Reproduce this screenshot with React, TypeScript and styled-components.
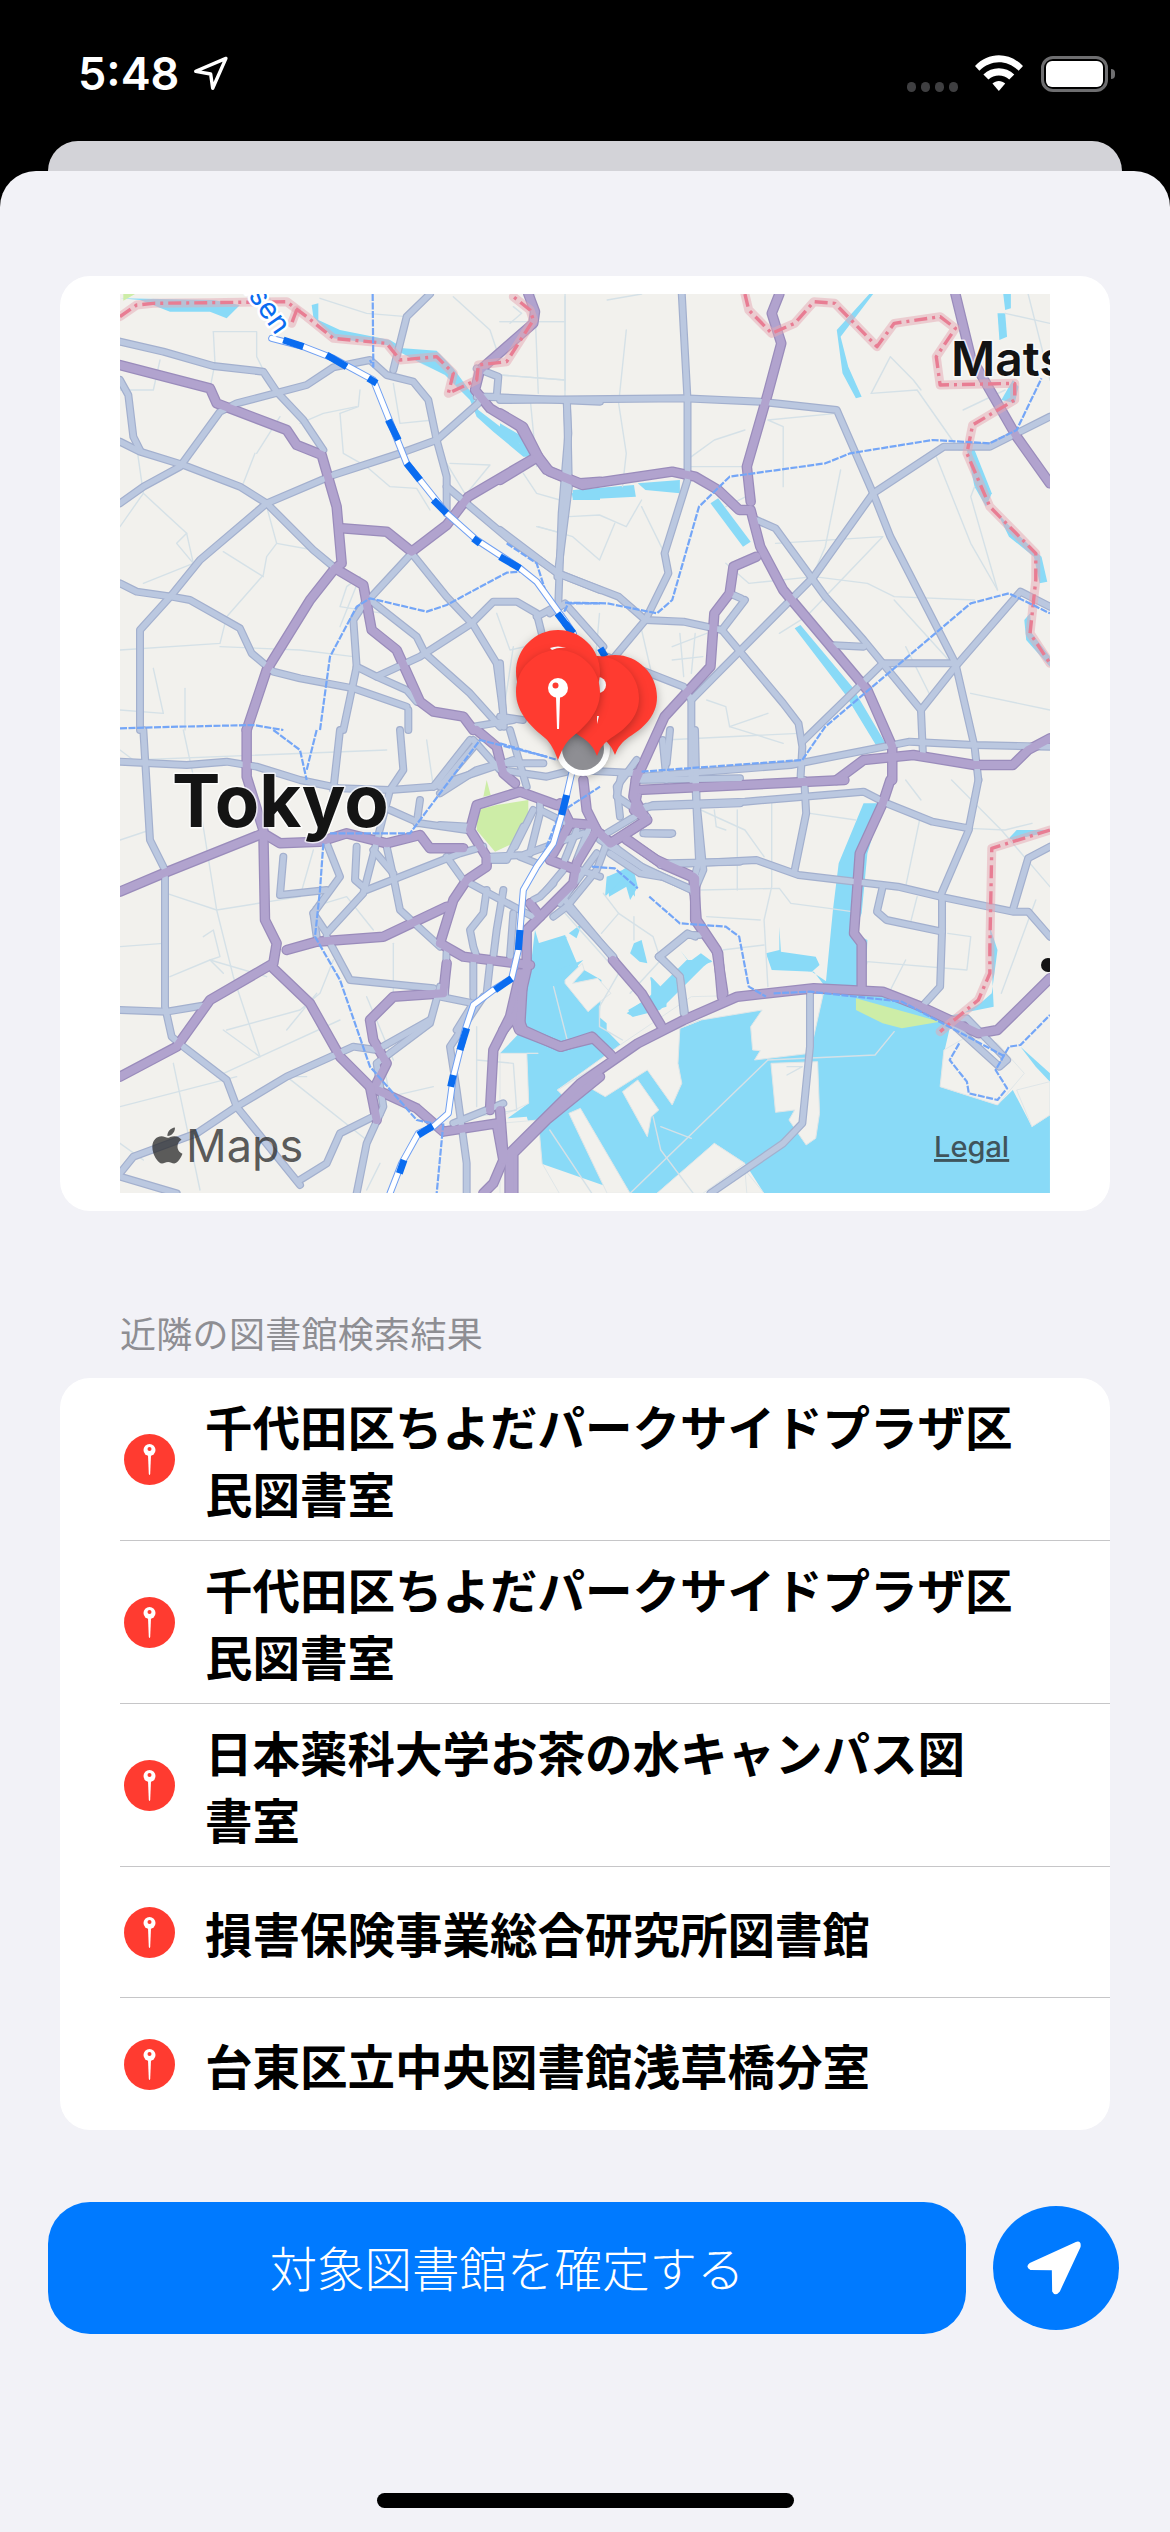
import React from "react";
import styled, { createGlobalStyle } from "styled-components";

const Global = createGlobalStyle`
  html, body { margin: 0; padding: 0; background: #000; }
`;

const CJK = `"Noto Sans CJK JP", "Noto Sans", sans-serif`;

const Screen = styled.div`
  width: 1170px; height: 2532px; background: #000; display: flex; flex-direction: column; overflow: hidden;
  font-family: ${CJK};
`;
const StatusBar = styled.div`
  height: 141px; box-sizing: border-box; padding: 55px 62px 0 78px; display: flex; align-items: flex-start; color: #fff;
`;
const Time = styled.div`
  font: 600 45px/38px Inter, sans-serif; width: 115px;
`;
const StatusRight = styled.div`
  margin-left: auto; display: flex; align-items: flex-start;
`;
const Dots = styled.div`
  display: flex; gap: 4.5px; margin: 27px 17px 0 0;
`;
const Dot = styled.span`
  width: 9.5px; height: 9.5px; border-radius: 50%; background: #3f3f41;
`;
const Battery = styled.div`
  width: 67px; height: 36px; margin: 1px 0 0 18px; box-sizing: border-box; border: 3px solid #6e6e70; border-radius: 12px; padding: 2px; position: relative;
  &::after { content: ""; position: absolute; right: -10px; top: 10px; width: 4px; height: 10px; background: #6e6e70; border-radius: 0 4px 4px 0; }
`;
const BatteryFill = styled.div`
  width: 100%; height: 100%; background: #fff; border-radius: 6px;
`;
const BackSheet = styled.div`
  margin: 0 48px; height: 30px; background: #d3d3d8; border-radius: 36px 36px 0 0; flex: none;
`;
const Sheet = styled.div`
  flex: 1; background: #f2f2f7; border-radius: 36px 36px 0 0; padding-top: 105px; display: flex; flex-direction: column;
`;
const MapCard = styled.div`
  margin: 0 60px; background: #fff; border-radius: 30px; padding: 18px 60px; height: 899px; flex: none;
`;
const MapSvg = styled.svg`
  display: block; width: 930px; height: 899px; background: #f2f1ed;
`;
const Water = styled.path`
  fill: #89daf7;
`;
const Land = styled.path`
  fill: #f2f1ed; stroke: #dfe6e8; stroke-width: 1; vector-effect: non-scaling-stroke;
`;
const Park = styled.path`
  fill: #cdeda7;
`;
const Line = styled.path<{ $c: string; $w: number; $dash?: string; $o?: number }>`
  fill: none; stroke: ${(p) => p.$c}; stroke-width: ${(p) => p.$w}; stroke-linejoin: round; stroke-linecap: ${(p) => (p.$dash ? "butt" : "round")};
  vector-effect: non-scaling-stroke; stroke-dasharray: ${(p) => p.$dash || "none"}; opacity: ${(p) => p.$o ?? 1};
`;
const MapLabel = styled.text<{ $s: number; $w: number }>`
  font-family: Inter, "Liberation Sans", sans-serif; font-size: ${(p) => p.$s}px; font-weight: ${(p) => p.$w}; fill: #141414;
  paint-order: stroke; stroke: rgba(255, 255, 255, 0.75); stroke-width: 3px; stroke-linejoin: round;
`;
const RailLabel = styled.text`
  font-family: Inter, "Liberation Sans", sans-serif; font-size: 29px; fill: #0a6cf0;
  paint-order: stroke; stroke: #fff; stroke-width: 5px; stroke-linejoin: round;
`;
const Attribution = styled.text<{ $s: number; $w: number; $u?: boolean }>`
  font-family: Inter, "Liberation Sans", sans-serif; font-size: ${(p) => p.$s}px; font-weight: ${(p) => p.$w}; fill: rgba(40, 40, 40, 0.75);
  text-decoration: ${(p) => (p.$u ? "underline" : "none")}; text-decoration-thickness: 3px;
`;
const SectionLabel = styled.div`
  margin: 96px 0 21px 120px; height: 50px; font-size: 36px; letter-spacing: 0.3px; line-height: 50px; color: #8e8e93; font-weight: 400; flex: none;
`;
const List = styled.div`
  margin: 0 60px; background: #fff; border-radius: 30px; flex: none; overflow: hidden;
`;
const Row = styled.div<{ $h: number }>`
  height: ${(p) => p.$h}px; margin-left: 60px; display: flex; align-items: center; box-sizing: border-box;
  &:not(:last-child) { border-bottom: 1.5px solid #c6c6c8; }
`;
const RowIcon = styled.svg`
  width: 51px; height: 51px; margin: 0 30px 0 4px; flex: none;
`;
const RowText = styled.div`
  font-size: 47.5px; line-height: 67px; font-weight: 600; color: #000; white-space: pre-line;
`;
const Actions = styled.div`
  margin: 72px 51px 0 48px; display: flex; align-items: center; justify-content: space-between; flex: none;
`;
const Confirm = styled.button`
  width: 918px; height: 132px; border: 0; border-radius: 42px; background: #007aff; color: #fff; font: 300 47.5px ${CJK}; padding: 0 0 3px;
`;
const Round = styled.button`
  width: 126px; height: 124px; border: 0; border-radius: 50%; background: #007aff; padding: 0; display: flex;
`;
const Home = styled.div`
  width: 417px; height: 15px; border-radius: 8px; background: #000; margin: 159px auto 0; flex: none;
`;

const Z: Record<string, string> = {
  a: "translate(100 280) scale(.33333)",
  b: "translate(500 280) scale(.3827 .33333)",
  c: "translate(100 730) scale(.33333)",
  d: "translate(500 780) scale(.3827 .33333)",
  e: "translate(440 730) scale(.33333)",
};
type Data = Record<string, string[]>;

const water: Data = {
  a: [
    "M60 55 L340 60 L420 75 L380 115 L330 95 L210 95 L120 60Z",
    "M635 75 L655 70 L655 120 L720 150 L870 180 L910 205 L1010 212 L1060 265 L1115 340 L1135 390 L1240 470 L1295 530 L1270 530 L1180 455 L1130 410 L1110 360 L1035 285 L955 245 L1000 270 L860 195 L700 175 L640 110Z",
    "M1415 640 L1500 625 L1500 660 L1420 660Z",
  ],
  b: [
    "M0 430 L60 470 L85 530 L60 525 L50 490 L0 465Z",
    "M190 630 L350 615 L355 650 L190 660Z",
    "M360 610 L470 600 L470 640 L380 630Z",
    "M550 670 L570 655 L655 785 L635 800Z",
    "M770 1045 L785 1035 L920 1220 L1010 1395 L985 1400 L900 1240Z",
    "M880 150 L965 42 L975 42 L890 170 L910 260 L945 350 L930 355 L895 280Z",
    "M1315 42 L1335 42 L1335 85 L1320 90Z",
    "M1300 100 L1320 100 L1325 170 L1305 180Z",
    "M1340 300 L1355 320 L1345 370 L1310 360Z",
    "M1220 510 L1240 510 L1285 640 L1270 680 L1240 620Z",
    "M1300 700 L1350 760 L1415 830 L1430 905 L1410 910 L1395 830 L1330 770Z",
    "M1370 1020 L1385 1000 L1390 1060 L1437 1130 L1437 1160 L1375 1080Z",
  ],
  d: [
    "M70 560 L100 490 L170 465 L205 560 L265 600 L260 730 L320 800 L470 730 L700 650 L850 625 L870 390 L885 250 L950 70 L1000 70 L960 220 L945 400 L925 460 L960 480 L955 620 L1160 710 L1290 680 L1280 440 L1300 510 L1285 640 L1255 670 L1180 720 L1160 820 L1150 920 L1300 975 L1340 930 L1390 1040 L1437 1005 L1437 1240 L690 1240 L640 1150 L560 1090 L410 1240 L330 1240 L105 1150 L70 1010 L20 1015 L75 970 L70 820 L0 820 L50 760 L60 640Z",
    "M695 520 L730 510 L730 440 L734 515 L825 530 L835 555 L815 575 L860 610 L850 620 L820 575 L710 570Z",
    "M280 290 L320 270 L345 250 L360 320 L340 360 L330 320 L285 350Z",
    "M395 590 L420 620 L435 620 L435 680 L345 710 L335 690 L395 650Z",
    "M350 490 L370 480 L385 550 L365 545 L340 520Z",
    "M470 510 L495 545 L525 520 L555 545 L490 570 L470 590 L490 540Z",
    "M180 460 L215 430 L200 475Z",
    "M1330 175 L1350 150 L1437 150 L1437 155 L1340 180Z",
    "M1360 800 L1437 880 L1437 905 L1400 860Z",
  ],
  e: [
    "M285 600 L300 650 L380 620 L350 720 L430 690 L360 760 L500 880 L500 900 L265 900 L265 770Z",
    "M500 440 L550 430 L580 410 L585 500 L545 450 L495 500Z",
    "M560 850 L640 790 L630 740 L660 770 L740 690 L815 690 L790 710 L660 840L580 860Z",
  ],
};
const land: Data = {
  d: [
    "M170 600 L215 550 L220 570 L190 610 L255 595 L290 640 L255 670 L230 695 L170 610Z",
    "M100 820 L70 820 L75 970 L0 1010 L0 820Z",
    "M150 930 L320 810 L470 745 L525 720 L685 690 L655 740 L660 810 L680 812 L665 840 L810 820 L845 640 L500 650 L320 790Z",
    "M525 720 L470 745 L465 850 L475 910 L450 975 L385 870 L275 950 L230 920 L175 960 L150 930 L320 810Z",
    "M708 850 L830 845 L835 1000 L825 1075 L800 1095 L755 1020 L770 990 L720 997Z",
    "M320 935 L360 900 L415 990 L395 1010 L385 1070Z",
    "M180 1000 L210 985 L340 1240 L280 1240Z",
    "M410 1240 L560 1090 L640 1150 L530 1240Z",
    "M645 1240 L690 1240 L640 1170Z",
    "M0 1030 L100 1020 L110 1150 L155 1240 L0 1240Z",
    "M1150 920 L1160 810 L1220 770 L1300 790 L1370 880 L1300 975Z",
    "M1350 930 L1437 905 L1437 1005 L1390 1040Z",
  ],
};
const parks: Data = {
  a: ["M70 42 L105 42 L70 62Z"],
  c: ["M1130 300 L1130 240 L1190 225 L1285 210 L1285 270 L1240 340 L1185 365Z", "M1150 200 L1160 150 L1172 195Z"],
  d: ["M930 655 L1150 725 L1050 745 L1000 730 L930 690Z"],
  e: ["M245 365 L262 362 L258 388Z"],
};
const minor: Data = {
  a: [
    "M340 155 L345 250 L330 325", "M340 155 L470 155 L470 230 L490 270", "M180 240 L160 330 L60 330", "M110 500 L130 640 L260 760 L280 850",
    "M60 740 L130 640", "M720 400 L730 520 L800 560 L870 620 L950 625 L990 690", "M770 380 L670 400 L600 430", "M465 520 L430 610", "M540 410 L470 520",
    "M500 680 L530 790 L640 810", "M530 790 L500 830 L490 885 L380 1010 L360 1090 L60 1110", "M370 815 L490 890", "M260 760 L230 790 L280 850 L130 910",
    "M1050 550 L1170 555 L1100 640", "M1270 580 L1310 640 L1380 660", "M1310 740 L1390 760", "M1290 350 L1310 560", "M1395 50 L1395 350", "M1200 125 L1395 125",
    "M1200 285 L1395 300", "M1060 50 L1170 150 L1200 240", "M660 55 L800 100 L920 110", "M500 42 L560 130", "M1230 130 L1265 100 L1240 80", "M880 310 L900 430 L1000 420",
    "M720 400 L775 380 L780 330", "M1040 550 L1100 650", "M160 1165 L190 1300 L60 1290", "M255 1225 L255 1350", "M720 1040 L780 890 L740 920 L720 980 L850 1000", "M360 1100 L600 1110 L760 1130",
    "M1190 1000 L1230 1110 L1320 1090", "M1240 1100 L1210 1300",
  ],
  b: [
    "M170 42 L170 330", "M280 60 L370 42", "M330 150 L310 370 L330 520 L320 620", "M0 125 L170 125", "M0 285 L170 300", "M90 42 L100 340", "M500 530 L560 480 L640 450", "M500 560 L650 560",
    "M880 400 L700 420 L740 440 L740 620", "M590 680 L660 640", "M890 570 L850 800 L820 880", "M970 340 L1090 330 L1200 510", "M970 340 L1020 230 L1080 300 L1100 330", "M1210 390 L1320 330",
    "M1140 530 L1230 790 L1300 930", "M180 710 L260 705 L330 740 L370 660", "M100 740 L190 770 L260 840 L300 730", "M590 850 L650 910 L820 890 L960 910 L1030 950 L1240 960", "M1030 960 L1180 1150",
    "M730 1060 L800 1010 L1000 770", "M720 790 L1000 770", "M370 680 L430 820", "M1230 1240 L1437 1290", "M540 1260 L590 1280 L600 1340 L740 1390", "M430 1380 L780 1360", "M600 1340 L700 1300",
    "M450 1100 L540 1060", "M450 1140 L530 1130", "M470 1060 L480 1190", "M510 1060 L500 1180", "M1060 1100 L1130 1260", "M1240 620 L1230 650 L1300 930", "M1320 100 L1437 130", "M1380 42 L1437 300", "M260 1000 L250 1130", "M370 1050 L400 1200",
  ],
  c: [
    "M60 330 L150 300", "M250 0 L300 230 L350 540 L400 740 L480 980", "M60 650 L190 640", "M200 490 L350 540 L600 500", "M210 740 L330 690 L500 740", "M310 620 L340 600 L360 680 L330 690 L370 730",
    "M60 1130 L410 1040", "M220 1000 L300 1380", "M380 900 L600 840 L660 790 L700 690", "M370 900 L480 980 L350 1040", "M480 980 L720 870", "M620 1040 L560 1040 L800 1230", "M640 530 L740 500 L820 600",
    "M560 900 L650 790", "M880 640 L880 800", "M60 1240 L130 1290", "M1130 890 L1130 1130", "M1130 990 L1240 1000 L1250 1140 L1130 1160", "M60 60 L100 90 L860 60", "M800 800 L880 990", "M850 1000 L870 1100 L1000 1070",
    "M840 1300 L800 1380", "M980 30 L1000 170", "M640 360 L600 500",
  ],
  d: [
    "M525 90 L640 150 L690 230", "M620 90 L620 330", "M710 70 L710 320 L690 420 L700 620", "M525 330 L730 325 L760 370 L860 385 L920 395", "M540 410 L680 420", "M580 510 L690 495", "M810 100 L930 120",
    "M1060 0 L1100 60", "M1100 100 L1060 320", "M1170 460 L1230 470 L1220 570 L960 545 L930 640", "M1090 350 L1070 440", "M1060 540 L1020 630", "M1400 360 L1310 640", "M1180 0 L1310 150 L1437 320",
    "M1225 145 L1320 150 L1390 130", "M170 400 L310 580 L260 680 L260 740 L320 780", "M270 340 L310 400 L400 470 L420 540 L340 640", "M310 400 L265 460", "M350 410 L350 480", "M700 840 L980 825 L1030 755",
    "M400 1010 L420 1110 L505 1240", "M130 1050 L240 1240", "M420 1040 L500 1075", "M140 620 L180 800", "M340 1240 L700 840", "M560 90 L565 140 L590 150", "M750 860 L790 860 L750 885",
  ],
};
const roads: Data = {
  a: [
    "M60 185 L190 215 L340 258 L490 275 L530 335 L610 420 L670 510", "M60 485 L120 515 L250 555 L420 620 L500 670 L640 810 L700 860",
    "M60 670 L130 620 L240 560 L360 395 L410 370 L620 315 L700 262 L810 240 L860 285 L940 305 L985 360 L1010 480 L1040 590 L1040 700",
    "M60 300 L85 345 L100 470 L120 510", "M500 670 L700 585 L900 520 L1010 480 L1135 370 L1145 350 L1500 365", "M500 670 L300 840 L215 945 L120 1050 L120 1350",
    "M60 910 L110 935 L215 950 L270 960 L420 1045 L455 1120 L520 1175 L600 1195 L760 1225 L920 1280", "M1040 620 L1230 780 L1375 880 L1500 930", "M1400 365 L1405 460 L1385 700 L1375 970",
    "M880 270 L920 110 L990 42", "M1130 350 L1190 350 L1195 290 L1130 265", "M810 955 L935 820 L1040 950 L1120 1035 L1190 1150 L1210 1300", "M800 960 L760 1020 L770 1160 L730 1350",
    "M830 1190 L960 1130 L1115 1030 L1180 965 L1250 965 L1310 1000 L1325 1060", "M1310 1010 L1375 975", "M810 960 L950 1070 L975 1120 L1110 1240 L1200 1340", "M770 1160 L830 1190 L920 1230 L950 1265",
    "M925 1290 L925 1350", "M1120 1340 L1240 1320",
  ],
  b: [
    "M0 360 L480 355 L680 365 L880 390 L975 640 L1020 770 L1190 1150 L1240 1400 L1250 1500", "M475 42 L490 360 L490 600 L430 820 L440 880 L380 1020 L300 1130", "M175 360 L180 620 L150 890",
    "M0 750 L150 880 L310 950 L380 1020 L480 1025 L580 1050 L740 1270 L780 1330 L790 1400 L785 1500", "M975 640 L1160 500 L1280 500 L1437 410", "M975 640 L820 890 L560 1190 L500 1260 L500 1500",
    "M670 720 L720 745 L850 950 L950 1080 L1100 1290 L1105 1420", "M790 1385 L1000 1150 L1190 1150", "M1100 1290 L1190 1160 L1360 935 L1437 980", "M860 1095 L950 1100", "M600 940 L630 955",
    "M370 1490 L760 1455 L1070 1385 L1240 1395 L1437 1400", "M280 1130 L480 1220 L500 1260", "M0 1150 L10 1340", "M0 1310 L60 1320", "M425 1380 L435 1500", "M580 1050 L640 960", "M130 1000 L170 970 L270 1100",
  ],
  c: [
    "M60 95 L260 105 L380 95 L470 110 L600 150 L720 175 L870 180 L1000 170 L1120 130 L1240 90", "M130 0 L150 330 L195 420 L195 830 L215 920 L250 950 L380 1050 L410 1130 L600 1365",
    "M60 840 L200 845 L320 825", "M60 1340 L230 1390", "M60 1330 L100 1280 L290 1210 L410 1130 L560 1040 L760 950 L830 960 L990 870", "M720 0 L700 180", "M900 0 L910 120 L870 180 L790 490 L680 610 L640 550 L720 440 L680 340",
    "M550 380 L540 495 L680 480", "M680 620 L750 750 L1000 775", "M770 350 L765 450 L800 480 L1080 370 L1150 350", "M860 350 L880 440 L900 540 L1020 650", "M820 360 L880 430", "M1000 170 L1110 30", "M960 210 L950 280",
    "M870 240 L960 280 L1100 300", "M1020 770 L990 880 L830 1000 L850 1130 L800 1240 L770 1390", "M840 1150 L720 1210 L680 1300 L600 1350", "M1100 1390 L1100 1300 L1070 1080 L1050 950 L1150 800", "M1060 1180 L1210 1120", "M640 550 L650 620",
  ],
  d: [
    "M360 95 L400 75 L640 65 L950 35 L1010 70 L1130 125 L1225 145 L1250 0", "M510 0 L520 240 L500 330", "M795 0 L800 100 L770 270", "M420 255 L670 240 L780 285 L1040 320 L1150 350 L1340 395 L1380 395 L1437 470",
    "M170 360 L300 540", "M1000 320 L985 395 L1010 420 L1155 455 L1155 350", "M1155 455 L1150 620 L1110 670", "M1225 150 L1150 350", "M1437 200 L1380 235 L1340 390", "M270 165 L310 210 L370 260 L500 330", "M380 160 L450 160",
    "M415 530 L470 590 L480 700", "M415 530 L490 460 L510 470", "M810 640 L810 800 L790 1030 L740 1090 L550 1240", "M1180 720 L1220 715 L1325 840 L1305 860 L1180 730",
  ],
  e: [
    "M590 150 L900 145", "M590 240 L620 230 L900 220", "M765 0 L770 220 L790 420 L760 490", "M680 400 L900 395", "M480 330 L620 420 L760 480", "M510 370 L600 430 L660 440", "M380 530 L520 680",
    "M780 615 L740 615 L660 680 L720 740 L735 850", "M500 310 L600 250", "M610 310 L690 312", "M540 260 L530 170 L590 90", "M150 380 L250 375 L430 310", "M90 460 L240 540 L280 560", "M140 480 L130 550 L90 600 L100 650 L110 680",
    "M190 480 L170 600 L160 680", "M220 550 L210 680", "M100 690 L100 800", "M150 700 L140 790", "M20 660 L15 800", "M270 370 L300 250 L300 210", "M225 350 L280 240", "M300 240 L380 280", "M240 380 L290 400", "M150 390 L200 390 L250 290",
    "M340 460 L300 500 L280 510", "M370 420 L320 480", "M410 300 L370 400", "M445 300 L410 390", "M420 420 L480 440", "M360 520 L470 370", "M0 285 L90 290", "M0 190 L110 120 L180 100", "M110 40 L0 170", "M100 30 L180 120 L320 140 L400 120 L600 130",
    "M210 0 L260 170", "M690 0 L680 100", "M0 800 L100 820 L50 900", "M20 380 L70 450", "M545 130 L530 200 L620 260", "M340 560 L380 530 L470 420 L500 340", "M200 100 L310 100",
  ],
};
const highways: Data = {
  a: [
    "M60 255 L330 325 L350 370 L560 450 L590 495 L665 525 L710 680 L725 850 L705 865 L630 960 L500 1170 L440 1350", "M725 745 L860 755 L935 815 L1040 735 L1105 650 L1310 530 L1340 570 L1440 610 L1500 605",
    "M705 865 L790 915 L815 1050 L890 1110 L960 1265 L1000 1295 L1090 1310 L1120 1350", "M1310 530 L1260 440 L1170 385 L1125 330 L1140 270 L1300 130 L1305 95 L1285 42",
  ],
  b: [
    "M0 600 L100 530 L130 575 L215 615 L450 575 L510 590 L570 630 L625 690 L655 690 L680 800 L740 930 L960 1230 L1025 1400 L1025 1500", "M655 665 L645 560 L700 340 L735 190 L710 100 L730 42",
    "M670 830 L610 860 L600 940 L560 1000 L550 1160 L430 1310 L355 1500", "M1190 42 L1230 230 L1350 470 L1437 610", "M0 400 L60 440 L100 530", "M880 1500 L950 1440 L1080 1425 L1240 1455 L1340 1455 L1380 1410 L1437 1375",
  ],
  c: [
    "M440 0 L440 140 L490 300 L495 570 L530 640 L520 700 L330 810 L230 950 L60 1040", "M60 485 L190 430 L490 310 L540 340 L660 335 L740 310 L860 340 L960 315 L990 355 L1090 355",
    "M520 715 L630 820 L720 980 L810 1070 L950 1135 L1030 1205 L1190 1180 L1210 1290 L1180 1360 L1150 1390", "M810 1070 L830 1170", "M560 660 L650 635 L850 620 L1040 530",
    "M1020 640 L1060 510 L1100 450 L1160 410 L1160 380 L1110 300 L1130 225 L1260 185 L1370 225", "M1020 640 L1090 680 L1290 705", "M1040 700 L1030 790 L880 800 L810 870 L820 930 L860 1000 L830 1060",
    "M1240 1390 L1240 1270 L1340 1170 L1500 1040", "M1260 730 L1230 860 L1180 960 L1170 1140", "M1250 850 L1270 900 L1380 950 L1480 925", "M1130 0 L1190 50 L1210 130 L1245 160",
  ],
  d: [
    "M25 1240 L25 1120 L60 1080 L210 910 L360 790 L480 720 L620 650 L820 625 L1000 635 L1100 680 L1250 760 L1300 750 L1437 595", "M1020 0 L1000 70 L940 220 L925 460 L945 490 L945 620",
    "M900 0 L360 30 L350 90 L385 120 L290 190 L265 165", "M335 180 L420 250 L510 295 L510 420 L570 520 L580 650", "M295 540 L370 640 L420 735", "M40 720 L50 750 L160 800 L240 770 L290 825", "M0 990 L10 1140",
  ],
  e: [
    "M360 220 L390 280 L460 285 L470 300 L410 400 L400 460 L320 540 L260 600 L260 720 L230 850 L190 900", "M470 300 L440 240 L430 150", "M330 390 L410 420", "M340 370 L390 280", "M590 130 L580 200 L620 270 L510 340 L480 310",
    "M270 520 L300 560", "M560 330 L650 390 L760 440 L770 570 L830 660 L850 790", "M250 730 L240 900",
  ],
};
const border: Data = {
  a: [
    "M60 110 L110 75 L160 70 L330 68 L560 65 L620 110 L700 175 L860 190 L900 240 L1010 230 L1060 280 L1045 340 L1130 300 L1135 255 L1220 245 L1300 120 L1290 90 L1240 50",
    "M590 90 L575 130",
  ],
  b: [
    "M640 42 L650 90 L710 160 L770 130 L820 65 L875 70 L985 200 L1030 130 L1150 110 L1190 145 L1140 230 L1150 315 L1345 310 L1345 360 L1235 435 L1220 520 L1280 680 L1400 820 L1400 900 L1385 1060 L1437 1150",
  ],
  d: ["M1437 150 L1285 205 L1280 500 L1280 580 L1250 660 L1150 755"],
};
const subway: Data = {
  a: [
    "M818 42 L820 260 L810 240", "M60 1345 L240 1340 L460 1335 L550 1350", "M1220 790 L1310 850 L1345 960",
    "M660 1350 L690 1130 L770 980 L810 955 L980 995 L1040 975 L1220 878 L1260 875", "M1500 970 L1405 970 L1390 1000",
  ],
  b: [
    "M170 968 L280 970 L410 1000 L450 960 L520 680 L600 590 L850 550 L915 520 L1130 480 L1280 490 L1350 450 L1415 295", "M790 1440 L850 1340 L1230 970 L1330 940 L1437 1000", "M0 1390 L150 1440", "M370 1475 L790 1440",
  ],
  c: [
    "M520 0 L600 60 L620 150", "M650 0 L620 120", "M690 310 L930 310 L1140 30 L1340 80", "M670 340 L660 480 L645 620 L720 750 L810 1010 L950 1170 L1000 1180", "M1030 1180 L1010 1390", "M1320 400 L1410 170", "M1400 235 L1500 170",
  ],
  d: [
    "M240 260 L300 265 L360 325", "M390 350 L470 430 L590 440 L625 470 L650 620 L695 650", "M715 640 L810 635 L1050 665 L1320 830",
    "M1200 790 L1175 840 L1220 905 L1225 940 L1300 960 L1325 925 L1295 870 L1330 800 L1360 795 L1437 705",
  ],
};
const rail: Data = {
  a: ["M515 175 L610 200 L700 235 L820 300 L880 450 L920 550 L1040 700 L1130 780 L1260 865 L1310 905 L1400 1030 L1420 1060"],
  c: ["M1415 130 L1400 195 L1385 255 L1360 340 L1310 410 L1270 480 L1260 600 L1255 660 L1235 745 L1180 780 L1120 825 L1095 900 L1060 1040 L1045 1150 L1000 1190 L955 1210 L905 1300 L870 1390"],
};
const railBlue: Data = {
  a: ["M550 180 L610 200", "M680 225 L740 260", "M805 295 L830 310", "M865 420 L895 480", "M920 550 L960 600", "M1000 660 L1040 700", "M1120 775 L1140 790", "M1200 830 L1260 865", "M1395 1030 L1420 1060"],
  b: ["M150 1000 L190 1060", "M262 1105 L275 1130"],
  c: ["M1400 195 L1385 255", "M1260 600 L1255 660", "M1235 745 L1185 780", "M1100 895 L1080 960", "M1060 1035 L1052 1070", "M998 1188 L955 1215", "M912 1290 L898 1330"],
};

function Layer({ data, render }: { data: Data; render: (d: string, k: string) => React.ReactNode }) {
  return (
    <>
      {Object.keys(data).map((z) => (
        <g key={z} transform={Z[z]}>
          {data[z].map((d, i) => render(d, z + i))}
        </g>
      ))}
    </>
  );
}

const PIN = "M0 -42 C23 -42 42 -23 42 0 C42 22 25 36 13 46 C7 51 3 60 0 68 C-3 60 -7 51 -13 46 C-25 36 -42 22 -42 0 C-42 -23 -23 -42 0 -42Z";
const PIN_SHORT = "M0 -42 C23 -42 42 -23 42 0 C42 20 27 32 14 40 C7 45 3 50 0 58 C-3 50 -7 45 -14 40 C-27 32 -42 20 -42 0 C-42 -23 -23 -42 0 -42Z";

const PinGlyph = () => (
  <>
    <circle cy="-4" r="10" fill="#fff" />
    <circle cx="-2.5" cy="-6.5" r="3" fill="#ff3b30" />
    <path d="M-2 5 L2 5 L1 37 L-1 37Z" fill="#fff" />
  </>
);

const MapPin = ({ x, y, glyph, short }: { x: number; y: number; glyph?: boolean; short?: boolean }) => (
  <g transform={`translate(${x} ${y})`} style={{ filter: "drop-shadow(0 3px 5px rgba(0,0,0,.28))" }}>
    <path d={short ? PIN_SHORT : PIN} fill="#ff3b30" />
    {glyph && <PinGlyph />}
  </g>
);

const TokyoMap = () => (
  <MapSvg viewBox="120 294 930 899">
    <Layer data={water} render={(d, k) => <Water key={k} d={d} />} />
    <Layer data={land} render={(d, k) => <Land key={k} d={d} />} />
    <Layer data={parks} render={(d, k) => <Park key={k} d={d} />} />
    <Layer data={minor} render={(d, k) => <Line key={k} d={d} $c="#d5e1e7" $w={1.4} />} />
    <Layer data={roads} render={(d, k) => <Line key={k} d={d} $c="#a3b0ce" $w={8} />} />
    <Layer data={highways} render={(d, k) => <Line key={k} d={d} $c="#9a8cbb" $w={10.5} />} />
    <Layer data={roads} render={(d, k) => <Line key={k} d={d} $c="#bbc8e0" $w={5.6} />} />
    <Layer data={highways} render={(d, k) => <Line key={k} d={d} $c="#b1a3ce" $w={8} />} />
    <Layer data={border} render={(d, k) => <Line key={k} d={d} $c="#e6a9b4" $w={9} $o={0.5} />} />
    <Layer data={border} render={(d, k) => <Line key={k} d={d} $c="#e87d93" $w={3.4} $dash="13 5 3 5" />} />
    <Layer data={subway} render={(d, k) => <Line key={k} d={d} $c="#74a6f7" $w={2.2} $dash="7 1.5" />} />
    <Layer data={rail} render={(d, k) => <Line key={k} d={d} $c="#6f9ff2" $w={7} />} />
    <Layer data={rail} render={(d, k) => <Line key={k} d={d} $c="#fff" $w={5} />} />
    <Layer data={railBlue} render={(d, k) => <Line key={k} d={d} $c="#0a6cf0" $w={7} $dash="400" />} />
    <RailLabel x="276" y="336" textAnchor="end" transform="rotate(55 276 336)">kansen</RailLabel>
    <MapLabel x="172" y="827" $s={72.5} $w={700}>Tokyo</MapLabel>
    <MapLabel x="951" y="376" $s={48} $w={600}>Mats</MapLabel>
    <circle cx="1048" cy="965" r="7" fill="#141414" />
    <g transform="translate(152 1125) scale(.08)">
      <path fill="rgba(40,40,40,.75)" d="M318.7 268.7c-.2-36.7 16.4-64.4 50-84.8-18.8-26.9-47.2-41.7-84.7-44.6-35.5-2.8-74.3 20.7-88.5 20.7-15 0-49.4-19.7-76.4-19.7C63.3 141.2 4 184.8 4 273.5q0 39.3 14.4 81.2c12.8 36.7 59 126.7 107.2 125.2 25.2-.6 43-17.9 75.8-17.9 31.8 0 48.3 17.9 76.4 17.9 48.6-.7 90.4-82.5 102.6-119.3-65.2-30.7-61.7-90-61.7-91.9zm-56.6-164.2c27.3-32.4 24.8-61.9 24-72.5-24.1 1.4-52 16.4-67.9 34.9-17.5 19.8-27.8 44.3-25.6 71.9 26.1 2 49.9-11.4 69.5-34.3z" />
    </g>
    <Attribution x="186" y="1162" $s={45} $w={400}>Maps</Attribution>
    <Attribution x="934" y="1157" $s={29} $w={500} $u>Legal</Attribution>
    <circle cx="583" cy="749" r="27" fill="#fff" style={{ filter: "drop-shadow(0 1px 4px rgba(0,0,0,.3))" }} />
    <circle cx="583" cy="749" r="21" fill="#8e8e93" />
    <MapPin x={615} y={697} short />
    <MapPin x={597} y={698} short />
    <circle cx="598" cy="685" r="8" fill="#fff" />
    <circle cx="592" cy="678" r="2.5" fill="#ff3b30" />
    <path d="M597 716 L599 716 L597 724Z" fill="#fff" />
    <MapPin x={558} y={672} />
    <path d="M550 648 Q558 645 566 648 Q558 647 552 650Z" fill="#fff" />
    <MapPin x={558} y={692} glyph />
  </MapSvg>
);

const RowPin = () => (
  <RowIcon viewBox="0 0 51 51">
    <circle cx="25.5" cy="25.5" r="25.5" fill="#ff3b30" />
    <circle cx="25.5" cy="16" r="6" fill="#fff" />
    <circle cx="25.5" cy="15" r="2" fill="#ff3b30" />
    <path d="M24 21 L27 21 L26.2 40 Q25.5 42 24.8 40Z" fill="#fff" />
  </RowIcon>
);

const items: { h: number; t: string }[] = [
  { h: 163, t: "千代田区ちよだパークサイドプラザ区\n民図書室" },
  { h: 163, t: "千代田区ちよだパークサイドプラザ区\n民図書室" },
  { h: 163, t: "日本薬科大学お茶の水キャンパス図\n書室" },
  { h: 131, t: "損害保険事業総合研究所図書館" },
  { h: 132, t: "台東区立中央図書館浅草橋分室" },
];

export default function App() {
  return (
    <Screen>
      <Global />
      <StatusBar>
        <Time>5:48</Time>
        <svg width="36" height="36" viewBox="400 52 106 106">
          <path d="M497 62 L408 100 L452 108 L458 150Z" fill="none" stroke="#fff" strokeWidth="10" strokeLinejoin="round" />
        </svg>
        <StatusRight>
          <Dots>
            <Dot /><Dot /><Dot /><Dot />
          </Dots>
          <svg width="48" height="36" viewBox="255 45 143 107">
            <path fill="#fff" d="M255 78 C295 35 357 35 398 78 L385 92 C350 58 302 58 268 92Z" />
            <path fill="#fff" d="M280 103 C305 78 347 78 372 103 L357 118 C340 102 312 102 295 118Z" />
            <path fill="#fff" d="M307 130 C318 120 334 120 345 130 L326 152Z" />
          </svg>
          <Battery>
            <BatteryFill />
          </Battery>
        </StatusRight>
      </StatusBar>
      <BackSheet />
      <Sheet>
        <MapCard>
          <TokyoMap />
        </MapCard>
        <SectionLabel>近隣の図書館検索結果</SectionLabel>
        <List>
          {items.map((it, i) => (
            <Row key={i} $h={it.h}>
              <RowPin />
              <RowText>{it.t}</RowText>
            </Row>
          ))}
        </List>
        <Actions>
          <Confirm>対象図書館を確定する</Confirm>
          <Round>
            <svg width="126" height="124" viewBox="10 50 377 370">
              <path fill="#fff" d="M258 157 Q275 152 272 172 L210 305 Q196 322 187 305 L186 242 L122 241 Q105 232 120 220Z" />
            </svg>
          </Round>
        </Actions>
        <Home />
      </Sheet>
    </Screen>
  );
}
